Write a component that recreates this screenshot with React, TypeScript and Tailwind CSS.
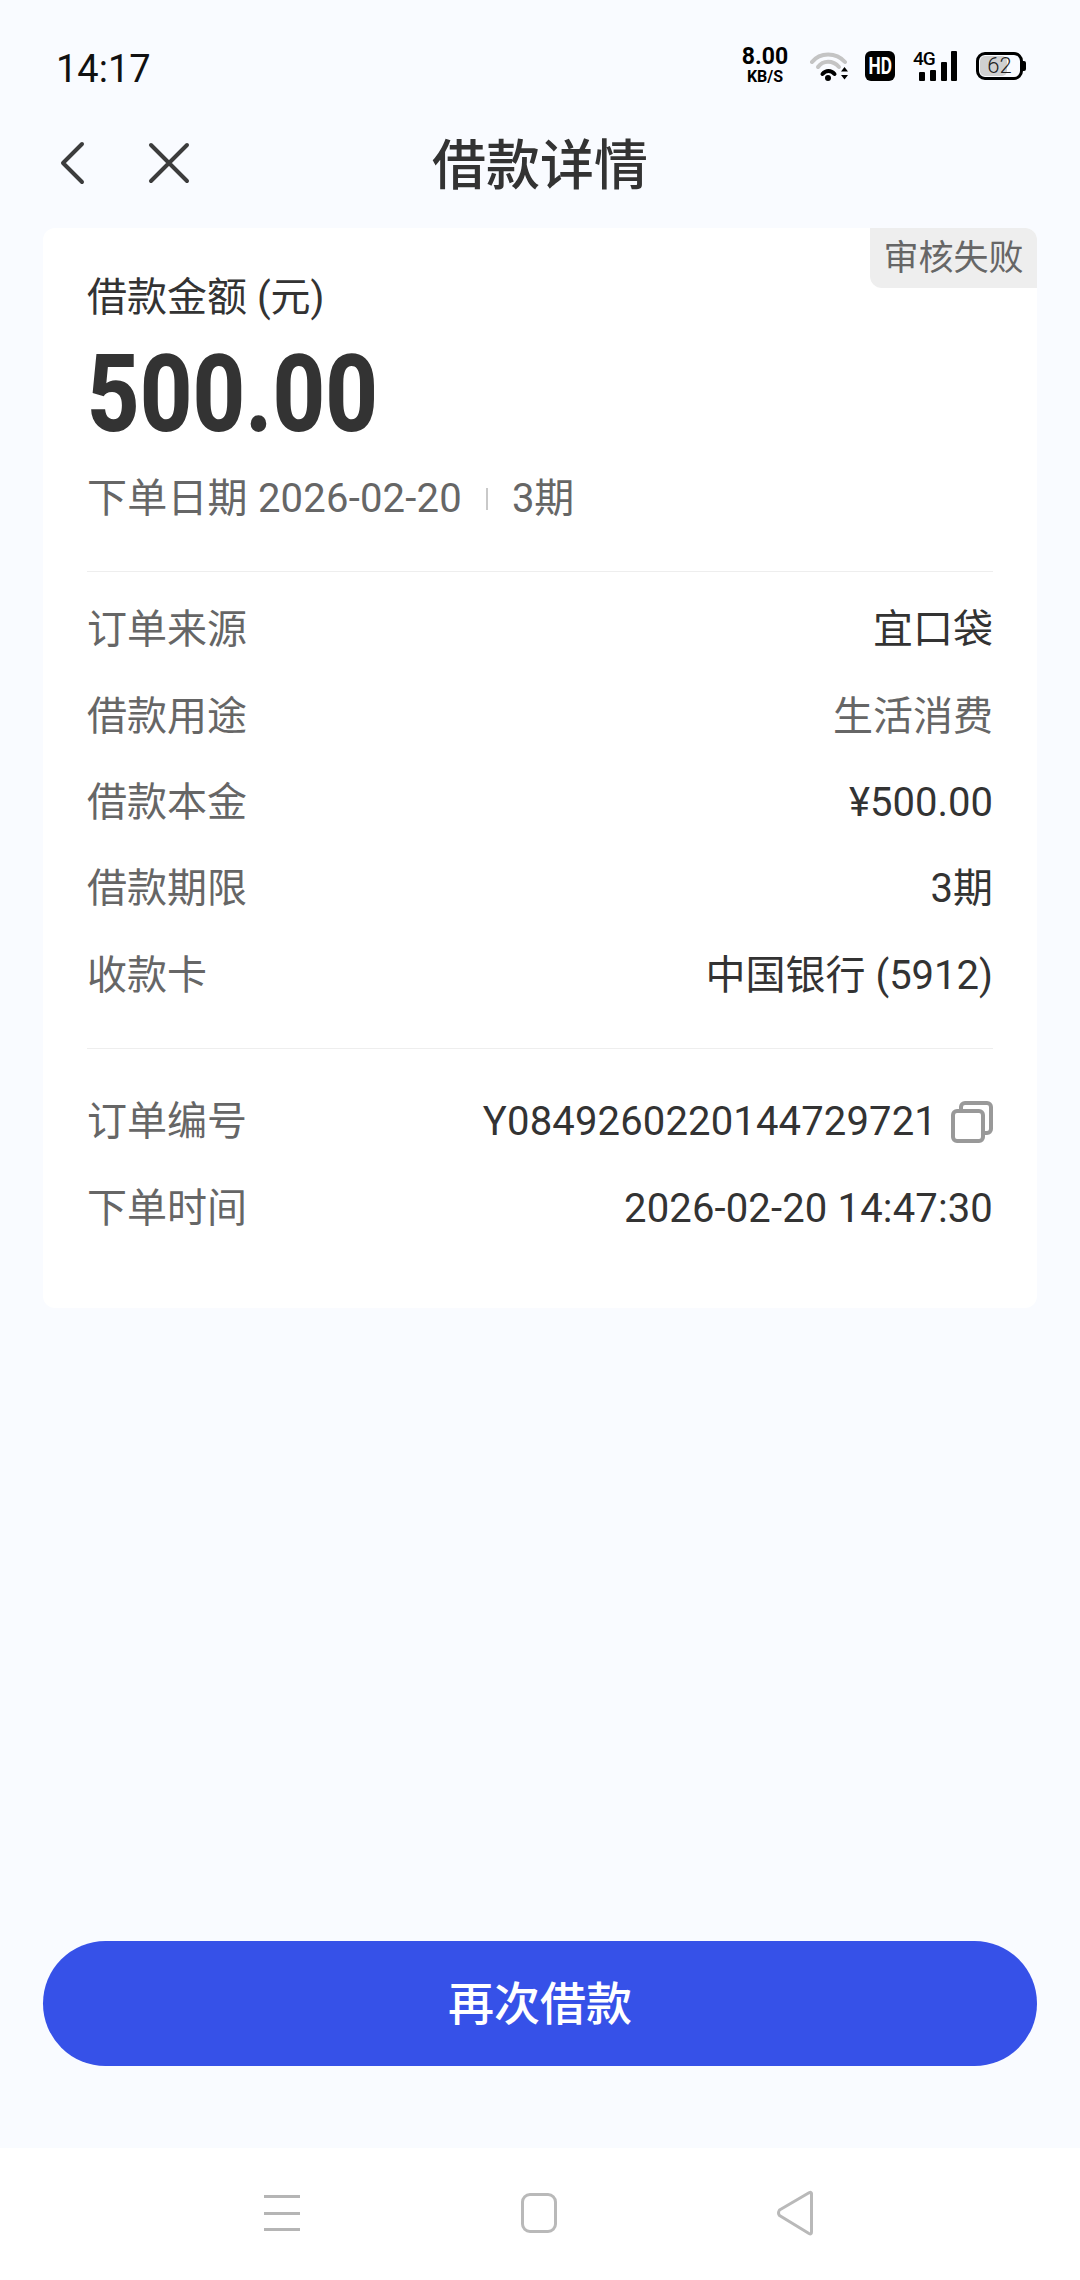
import React from 'react';
function Row({ l, r, c = 'text-[#333]' }: { l: string; r: React.ReactNode; c?: string }) {
  return (
    <div className="flex h-[86.4px] items-center justify-between">
      <span className="text-[#666]">{l}</span>
      <span className={c}>{r}</span>
    </div>
  );
}
export default function App() {
  return (
    <div className="flex h-[2280px] w-[1080px] flex-col overflow-hidden bg-[#f9fbff] font-['Roboto','Noto_Sans_CJK_SC',sans-serif] text-[40px] leading-none">
      <div className="flex h-[132px] shrink-0 items-start justify-between pl-[56px] pr-[57px] pt-[46px]">
        <span className="mt-[3px] text-[38px] leading-[40px] text-[#111]">14:17</span>
        <div className="flex items-start">
          <div className="flex w-[50px] flex-col items-center font-bold text-black">
            <span className="text-[23px] leading-[22px]">8.00</span>
            <span className="text-[16px] leading-[18px]">KB/S</span>
          </div>
          <svg width="40" height="30" viewBox="0 0 40 30" className="ml-[20px] mt-[5px]">
            <path d="M2 11 C10 1 26 1 35 11" fill="none" stroke="#c4c4c4" strokeWidth="4" strokeLinecap="round" />
            <path d="M8 16 C13 9 23 9 29 16" fill="none" stroke="#c4c4c4" strokeWidth="4" strokeLinecap="round" />
            <path d="M12.5 23 C16 19 21 19 24.5 23" fill="none" stroke="#000" strokeWidth="4" strokeLinecap="round" />
            <circle cx="18" cy="27" r="3" fill="#000" />
            <path d="M31 20.5l3.5-4.5 3.5 4.5zM31 24l3.5 4.5 3.5-4.5z" fill="#000" />
          </svg>
          <div className="ml-[15px] mt-[5px] flex h-[30px] w-[30px] items-center justify-center rounded-[6px] bg-black text-[24px] font-bold text-white">
            <span className="scale-x-[0.72]">HD</span>
          </div>
          <div className="relative ml-[18px] mt-[5px] h-[30px] w-[44px]">
            <span className="absolute left-0 top-0 text-[19px] font-medium leading-[15px] tracking-[-1px] text-black">4G</span>
            <span className="absolute bottom-0 left-[6px] h-[9px] w-[6px] rounded-[1px] bg-black" />
            <span className="absolute bottom-0 left-[17px] h-[11px] w-[6px] rounded-[1px] bg-black" />
            <span className="absolute bottom-0 left-[28px] h-[19px] w-[6px] rounded-[1px] bg-black" />
            <span className="absolute bottom-0 left-[38px] h-[30px] w-[6px] rounded-[1px] bg-black" />
          </div>
          <div className="relative ml-[19px] mt-[6px] flex h-[28px] w-[47px] items-center rounded-[9px] border-[3px] border-black p-[1px]">
            <div className="h-full w-[70%] rounded-[5px] bg-[#d0d0d0]" />
            <span className="absolute inset-0 flex items-center justify-center text-[22px] font-light text-[#222]">62</span>
            <span className="absolute -right-[6px] top-[6px] h-[10px] w-[3px] rounded-r-[2px] bg-black" />
          </div>
        </div>
      </div>

      <div className="relative flex h-[96px] shrink-0 items-start justify-center">
        <div className="absolute left-[58px] top-[8px] flex items-center gap-[58px]">
          <svg width="30" height="46" viewBox="0 0 30 46" fill="none" stroke="#3c3c3c" strokeWidth="4" strokeLinecap="round" strokeLinejoin="round">
            <path d="M24 4 L5 23 L24 42" />
          </svg>
          <svg width="46" height="46" viewBox="0 0 46 46" fill="none" stroke="#3c3c3c" strokeWidth="4" strokeLinecap="round">
            <path d="M5 5 L41 41 M41 5 L5 41" />
          </svg>
        </div>
        <span className="mt-[3px] text-[54px] font-medium leading-[64px] text-[#333]">借款详情</span>
      </div>

      <div className="relative mx-[43px] flex h-[1080px] shrink-0 flex-col rounded-[12px] bg-white px-[44px] pt-[46px]">
        <div className="absolute right-0 top-0 flex h-[60px] w-[167px] items-center justify-center rounded-bl-[12px] rounded-tr-[12px] bg-[#eeeeee] text-[35px] text-[#666]">审核失败</div>
        <div className="text-[40px] leading-[48px] text-[#333]">借款金额 (元)</div>
        <div className="mt-[18px] origin-left scale-x-[0.855] text-[107px] font-extrabold leading-[110px] text-[#333]">500.00</div>
        <div className="mt-[25px] flex h-[48px] items-center text-[#666]">
          <span className="tracking-[0.2px]">下单日期 2026-02-20</span>
          <span className="mx-[24px] h-[22px] w-[2px] bg-[#c9c9c9]" />
          <span>3期</span>
        </div>
        <div className="mt-[48px] h-[1px] bg-[#eeeeee]" />
        <div className="mt-[15px]">
          <Row l="订单来源" r="宜口袋" />
          <Row l="借款用途" r="生活消费" c="text-[#666]" />
          <Row l="借款本金" r="¥500.00" />
          <Row l="借款期限" r="3期" />
          <Row l="收款卡" r="中国银行 (5912)" />
        </div>
        <div className="mt-[29px] h-[1px] bg-[#eeeeee]" />
        <div className="mt-[30px]">
          <Row
            l="订单编号"
            r={
              <span className="flex items-center gap-[14px] tracking-[0.15px]">
                Y0849260220144729721
                <svg width="42" height="42" viewBox="0 0 42 42" fill="none" stroke="#999" strokeWidth="4" strokeLinejoin="round">
                  <rect x="2" y="10" width="30" height="30" rx="4" />
                  <path d="M10 10 V6 a4 4 0 0 1 4 -4 H36 a4 4 0 0 1 4 4 V28 a4 4 0 0 1 -4 4 H32" />
                </svg>
              </span>
            }
          />
          <Row l="下单时间" r={<span className="tracking-[0.15px]">2026-02-20 14:47:30</span>} />
        </div>
      </div>

      <div className="flex flex-1 items-end px-[43px] pb-[82px]">
        <button className="flex h-[125px] w-full items-center justify-center rounded-full bg-[#3651e8] text-[46px] font-medium text-white">再次借款</button>
      </div>

      <div className="flex h-[132px] shrink-0 items-start gap-[219px] bg-white pl-[264px] pt-[46px]">
        <div className="flex h-[38px] w-[36px] flex-col justify-between py-[1px]">
          <span className="h-[3px] bg-[#b5b5b5]" />
          <span className="h-[3px] bg-[#b5b5b5]" />
          <span className="h-[3px] bg-[#b5b5b5]" />
        </div>
        <div className="ml-[2px] -mt-[1px] h-[40px] w-[36px] rounded-[9px] border-[3px] border-[#b9b9b9]" />
        <svg width="38" height="46" viewBox="0 0 38 46" fill="none" stroke="#b9b9b9" strokeWidth="3" strokeLinejoin="round" className="-mt-[4px]">
          <path d="M35.5 3.5 Q35.5 1.5 33 2.8 L3.5 20 Q1.5 23 3.5 25.5 L33 43.5 Q35.5 44.8 35.5 42 Z" />
        </svg>
      </div>
    </div>
  );
}
